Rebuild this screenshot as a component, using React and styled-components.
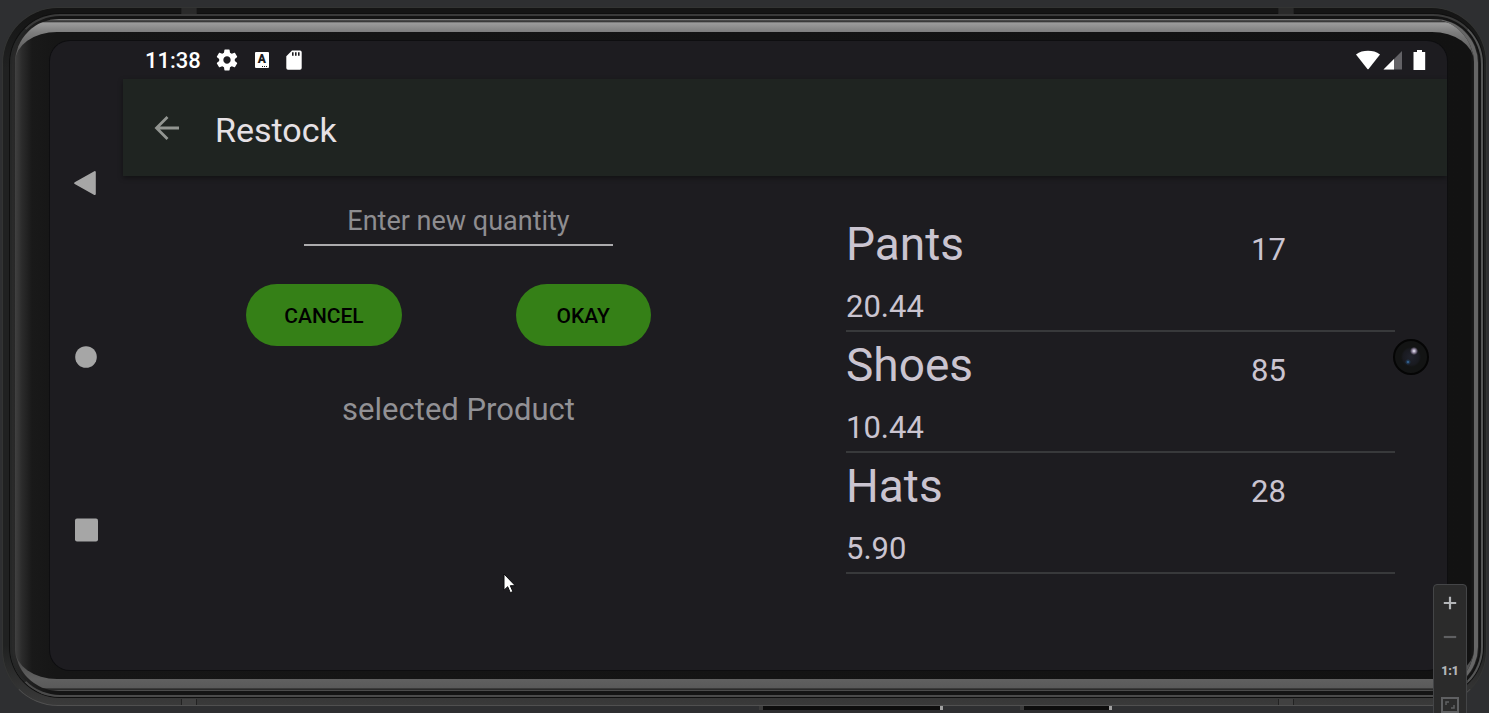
import React from "react";
import styled, { createGlobalStyle } from "styled-components";

const GlobalStyle = createGlobalStyle`
  *, *::before, *::after { box-sizing: border-box; }
  body { margin: 0; background: #2e2f31; font-family: Roboto, sans-serif; }
  button, input { font-family: inherit; }
`;

const Page = styled.div`
  position: relative;
  display: flex;
  flex-direction: column;
  min-height: 100vh;
  padding: 7px 2px;
  overflow: hidden;
  background: #2e2f31;
`;

const Shell = styled.div`
  position: relative;
  flex: 1;
  display: flex;
  padding: 6px 3px 8px 7px;
  border-radius: 56px;
  border: 1px solid #333433;
  border-bottom-color: #505050;
  background: linear-gradient(180deg, #151515 0, #151515 6px, #202121 60px, #202121 calc(100% - 60px), #3a3a3a 100%);
`;

const Seam = styled.span`
  position: absolute;
  left: ${(p) => p.$left};
  ${(p) => p.$edge}: 0;
  width: 16px;
  height: 6px;
  background: ${(p) => (p.$edge === "top" ? "#2a2a2a" : "#414141")};
  border: 1px solid #222;
  border-width: 0 1px;
`;

const Rim = styled.div`
  flex: 1;
  display: flex;
  padding: 3px 7px 4px 3px;
  border: 2px solid #262727;
  border-top-color: #3a3a3a;
  border-bottom-color: #4a4a4a;
  border-right-color: #555656;
  border-radius: 50px;
  background: linear-gradient(90deg, #2a2a2a 0, #262626 6px, #141414 40px, #141414 100%);
  box-shadow: 0 0 0 1px #0f0f0f;
`;

const Chrome = styled.div`
  flex: 1;
  display: flex;
  padding: 13px 0 12px;
  border-radius: 44px;
  background: linear-gradient(180deg, #777 0, #777 1px, #1a1a1a 2px, #9c9c9c 4px, #7e7e7e 13px, #2a2a2a 60px, #2a2a2a calc(100% - 60px), #606060 calc(100% - 12px), #5a5a5a calc(100% - 3px), #1a1a1a calc(100% - 2px), #5a5a5a 100%);
  box-shadow: 4px 0 0 #666, 5px 0 0 #222;
`;

const Glass = styled.div`
  flex: 1;
  display: flex;
  padding: 9px 27px 9px 35px;
  border-radius: 42px / 30px;
  background: linear-gradient(90deg, #414141 0, #2b2b2b 7px, #191919 17px, #161616 40px, #121212 calc(100% - 4px), #1c1c1c 100%);
`;

const Screen = styled.div`
  flex: 1;
  display: flex;
  min-width: 0;
  overflow: hidden;
  border-radius: 20px;
  background: #1d1c20;
  box-shadow: 0 0 0 1px #0e0e10;
`;

const NavRail = styled.nav`
  display: flex;
  flex-direction: column;
  align-items: flex-start;
  justify-content: center;
  gap: 149px;
  flex: 0 0 73px;
  padding-left: 24px;
`;

const IconButton = styled.button`
  display: flex;
  padding: 0;
  border: 0;
  background: none;
  color: ${(p) => p.$color || "#a6a6a6"};
  svg { display: block; }
`;

const Main = styled.main`
  flex: 1;
  display: flex;
  flex-direction: column;
  min-width: 0;
`;

const StatusBar = styled.div`
  display: flex;
  align-items: center;
  gap: 15px;
  height: 38px;
  padding: 0 20px 0 22px;
  color: #fff;
  svg { display: block; }
`;

const Clock = styled.time`
  font-size: 22px;
  line-height: 28px;
  font-weight: 500;
  padding-top: 2px;
`;

const Signals = styled.div`
  display: flex;
  gap: 2px;
  margin-left: auto;
`;

const AppBar = styled.header`
  display: flex;
  align-items: center;
  gap: 32px;
  height: 97px;
  padding: 4px 28px 0;
  background: #1f2421;
  box-shadow: 0 2px 5px rgba(0, 0, 0, 0.4);
`;

const Title = styled.h1`
  margin: 0;
  font-size: 34px;
  line-height: 42px;
  font-weight: 400;
  color: #e6e1e5;
`;

const Content = styled.div`
  flex: 1;
  display: grid;
  grid-template-columns: 671fr 653fr;
`;

const Form = styled.form`
  display: flex;
  flex-direction: column;
  align-items: center;
  padding-top: 22px;
`;

const Quantity = styled.input`
  width: 309px;
  height: 48px;
  padding: 0;
  border: 0;
  border-bottom: 2px solid #acabad;
  border-radius: 0;
  outline: 0;
  background: none;
  color: #e6e1e5;
  font-size: 27px;
  text-align: center;
  &::placeholder { color: #8e8d90; opacity: 1; }
`;

const Actions = styled.div`
  display: flex;
  gap: 114px;
  padding: 38px 20px 42px 0;
`;

const Action = styled.button`
  height: 62px;
  padding: 2px 38px 0;
  min-width: 135px;
  border: 0;
  border-radius: 31px;
  background: #358017;
  color: #000;
  font-size: 21px;
  font-weight: 500;
`;

const Selected = styled.output`
  font-size: 31px;
  line-height: 44px;
  color: #929195;
`;

const Products = styled.ul`
  margin: 0;
  padding: 35px 52px 0;
  list-style: none;
`;

const Product = styled.li`
  display: grid;
  grid-template-columns: 1fr 144px;
  align-items: baseline;
  align-content: start;
  height: 121px;
  padding-top: 5px;
  border-bottom: 2px solid #38393b;
  color: #cac4d0;
`;

const Name = styled.span`
  font-size: 46px;
  line-height: 57px;
`;

const Figure = styled.span`
  font-size: 31px;
  line-height: 57px;
`;

const Camera = styled.div`
  position: absolute;
  right: 60px;
  top: 50%;
  width: 36px;
  height: 36px;
  margin-top: -18px;
  border: 2px solid #050505;
  border-radius: 50%;
  background:
    radial-gradient(circle at 19px 10px, #f4f4ff 0, #8a7f99 2px, transparent 4px),
    radial-gradient(circle at 13px 21px, #5fa4e8 0, #204060 1px, transparent 3px),
    radial-gradient(circle at 16px 16px, #20222c 0, #191a20 8px, #131414 10px);
`;

const Cursor = styled.svg`
  position: absolute;
  left: 503px;
  top: 573px;
`;

const ZoomPanel = styled.aside`
  position: absolute;
  right: 22px;
  bottom: -10px;
  display: flex;
  flex-direction: column;
  align-items: center;
  gap: 10px;
  width: 34px;
  height: 139px;
  padding-top: 6px;
  border: 1px solid #444547;
  border-radius: 4px;
  background: #2b2b2b;
`;

const ZoomButton = styled.button`
  display: flex;
  align-items: center;
  justify-content: center;
  width: 24px;
  height: 24px;
  flex: none;
  padding: 0;
  border: 0;
  background: none;
  color: ${(p) => (p.$dim ? "#5f6062" : "#b4b6b9")};
  font-size: 12px;
  font-weight: 900;
  white-space: nowrap;
`;

const Key = styled.span`
  position: absolute;
  left: ${(p) => p.$left};
  bottom: 3px;
  width: ${(p) => p.$width};
  height: 4px;
  background: #0d0d0d;
  border-right: 3px solid #a0a0a0;
  border-left: 4px solid #3c3c3c;
`;

const PRODUCTS = [
  { name: "Pants", quantity: 17, price: "20.44" },
  { name: "Shoes", quantity: 85, price: "10.44" },
  { name: "Hats", quantity: 28, price: "5.90" },
];

const GearIcon = () => (
  <svg width="22" height="22" viewBox="1.5 1.5 21 21" fill="currentColor">
    <path d="M19.43 12.98c.04-.32.07-.64.07-.98s-.03-.66-.07-.98l2.11-1.65c.19-.15.24-.42.12-.64l-2-3.46c-.12-.22-.39-.3-.61-.22l-2.49 1c-.52-.4-1.08-.73-1.69-.98l-.38-2.65C14.46 2.18 14.25 2 14 2h-4c-.25 0-.46.18-.49.42l-.38 2.65c-.61.25-1.17.59-1.69.98l-2.49-1c-.23-.09-.49 0-.61.22l-2 3.46c-.13.22-.07.49.12.64l2.11 1.65c-.04.32-.07.65-.07.98s.03.66.07.98l-2.11 1.65c-.19.15-.24.42-.12.64l2 3.46c.12.22.39.3.61.22l2.49-1c.52.4 1.08.73 1.69.98l.38 2.65c.03.24.24.42.49.42h4c.25 0 .46-.18.49-.42l.38-2.65c.61-.25 1.17-.59 1.69-.98l2.49 1c.23.09.49 0 .61-.22l2-3.46c.12-.22.07-.49-.12-.64l-2.11-1.65zM12 15.5c-1.93 0-3.5-1.57-3.5-3.5s1.57-3.5 3.5-3.5 3.5 1.57 3.5 3.5-1.57 3.5-3.5 3.5z" />
  </svg>
);

const LetterBadge = styled.span`
  display: flex;
  flex-direction: column;
  align-items: center;
  width: 14px;
  height: 16px;
  margin: 0 2px;
  border-radius: 1px;
  background: #fff;
  color: #1d1c20;
  font-size: 12px;
  line-height: 15px;
  font-weight: 900;
  &::after {
    content: "";
    align-self: flex-end;
    width: 6px;
    height: 1px;
    margin: -1px 1px 0 0;
    background: repeating-linear-gradient(90deg, #1d1c20 0 1px, #fff 1px 2px);
    flex: none;
  }
`;

const CardIcon = () => (
  <svg width="16" height="20" viewBox="0 0 16 20">
    <path d="M6 0.5H14a1.7 1.7 0 0 1 1.7 1.7V18a1.7 1.7 0 0 1-1.7 1.7H2A1.7 1.7 0 0 1 .3 18V6.2z" fill="currentColor" />
    <path d="M6.8 2.2v3.6M9.8 2.2v3.6M12.8 2.2v3.6" stroke="#1d1c20" strokeWidth="1.6" />
  </svg>
);

export default function App() {
  return (
    <Page>
      <GlobalStyle />
      <Shell>
        <Seam $edge="top" $left="12%" />
        <Seam $edge="top" $left="86%" />
        <Seam $edge="bottom" $left="12%" />
        <Seam $edge="bottom" $left="86%" />
        <Rim>
          <Chrome>
            <Glass>
              <Screen>
                <NavRail aria-label="System navigation">
                  <IconButton aria-label="Back">
                    <svg width="24" height="26" viewBox="0 0 24 26">
                      <path d="M1.2 13.2 20.8 2v22z" fill="currentColor" stroke="currentColor" strokeWidth="2" strokeLinejoin="round" />
                    </svg>
                  </IconButton>
                  <IconButton aria-label="Home">
                    <svg width="24" height="24" viewBox="0 0 24 24"><circle cx="12" cy="12" r="10.8" fill="currentColor" /></svg>
                  </IconButton>
                  <IconButton aria-label="Recent apps">
                    <svg width="24" height="24" viewBox="0 0 24 24"><rect x="1" y="0.5" width="23" height="23" rx="2" fill="currentColor" /></svg>
                  </IconButton>
                </NavRail>
                <Main>
                  <StatusBar>
                    <Clock>11:38</Clock>
                    <GearIcon />
                    <LetterBadge>A</LetterBadge>
                    <CardIcon />
                    <Signals>
                      <svg width="26" height="20" viewBox="0 0 26 20"><path d="M1 4.6C4.5 1.8 8.5.8 13 .8S21.500 1.800 25 4.600L13.600 19Q13 19.600 12.400 19z" fill="#fff" /></svg>
                      <svg width="20" height="20" viewBox="0 0 20 20">
                        <path d="M19 1v18.500H.5z" fill="#636266" />
                        <path d="M11 9v10.500H.5z" fill="#fff" />
                      </svg>
                      <svg width="22" height="20" viewBox="0 0 22 20"><path d="M12 0h5v2h3.200v18H8.500V2H12z" fill="#fff" /></svg>
                    </Signals>
                  </StatusBar>
                  <AppBar>
                    <IconButton $color="#929591" aria-label="Navigate up">
                      <svg width="32" height="32" viewBox="0 0 32 32" fill="none" stroke="currentColor" strokeWidth="2.800">
                        <path d="M28 14H5.500M16.500 3 5.500 14l11 11" />
                      </svg>
                    </IconButton>
                    <Title>Restock</Title>
                  </AppBar>
                  <Content>
                    <Form onSubmit={(e) => e.preventDefault()}>
                      <Quantity aria-label="Enter new quantity" placeholder="Enter new quantity" inputMode="numeric" />
                      <Actions>
                        <Action type="button">CANCEL</Action>
                        <Action type="submit">OKAY</Action>
                      </Actions>
                      <Selected>selected Product</Selected>
                    </Form>
                    <Products>
                      {PRODUCTS.map((p) => (
                        <Product key={p.name}>
                          <Name>{p.name}</Name>
                          <Figure>{p.quantity}</Figure>
                          <Figure>{p.price}</Figure>
                        </Product>
                      ))}
                    </Products>
                  </Content>
                </Main>
              </Screen>
            </Glass>
          </Chrome>
        </Rim>
      </Shell>
      <Key $left="51%" $width="184px" />
      <Key $left="68.500%" $width="92px" />
      <Camera />
      <Cursor width="14" height="22" viewBox="0 0 14 22">
        <path d="M1 1v16.200l3.700-3.500 2.600 6 2.600-1.100-2.600-5.900h5z" fill="#fff" stroke="#0b0b0d" strokeWidth="1" />
      </Cursor>
      <ZoomPanel aria-label="Zoom">
        <ZoomButton aria-label="Zoom in">
          <svg width="14" height="14" viewBox="0 0 14 14" stroke="currentColor" strokeWidth="2.200"><path d="M7 .8v12.400M.8 7h12.400" /></svg>
        </ZoomButton>
        <ZoomButton $dim aria-label="Zoom out">
          <svg width="14" height="14" viewBox="0 0 14 14" stroke="currentColor" strokeWidth="2.200"><path d="M.8 7h12.400" /></svg>
        </ZoomButton>
        <ZoomButton>1:1</ZoomButton>
        <ZoomButton $dim aria-label="Fit to window">
          <svg width="18" height="16" viewBox="0 0 18 16" fill="none" stroke="currentColor" strokeWidth="2">
            <rect x="1" y="1" width="16" height="14" />
            <path d="M5 8V5h3M13 8v3h-3" strokeWidth="1.500" />
          </svg>
        </ZoomButton>
      </ZoomPanel>
    </Page>
  );
}
